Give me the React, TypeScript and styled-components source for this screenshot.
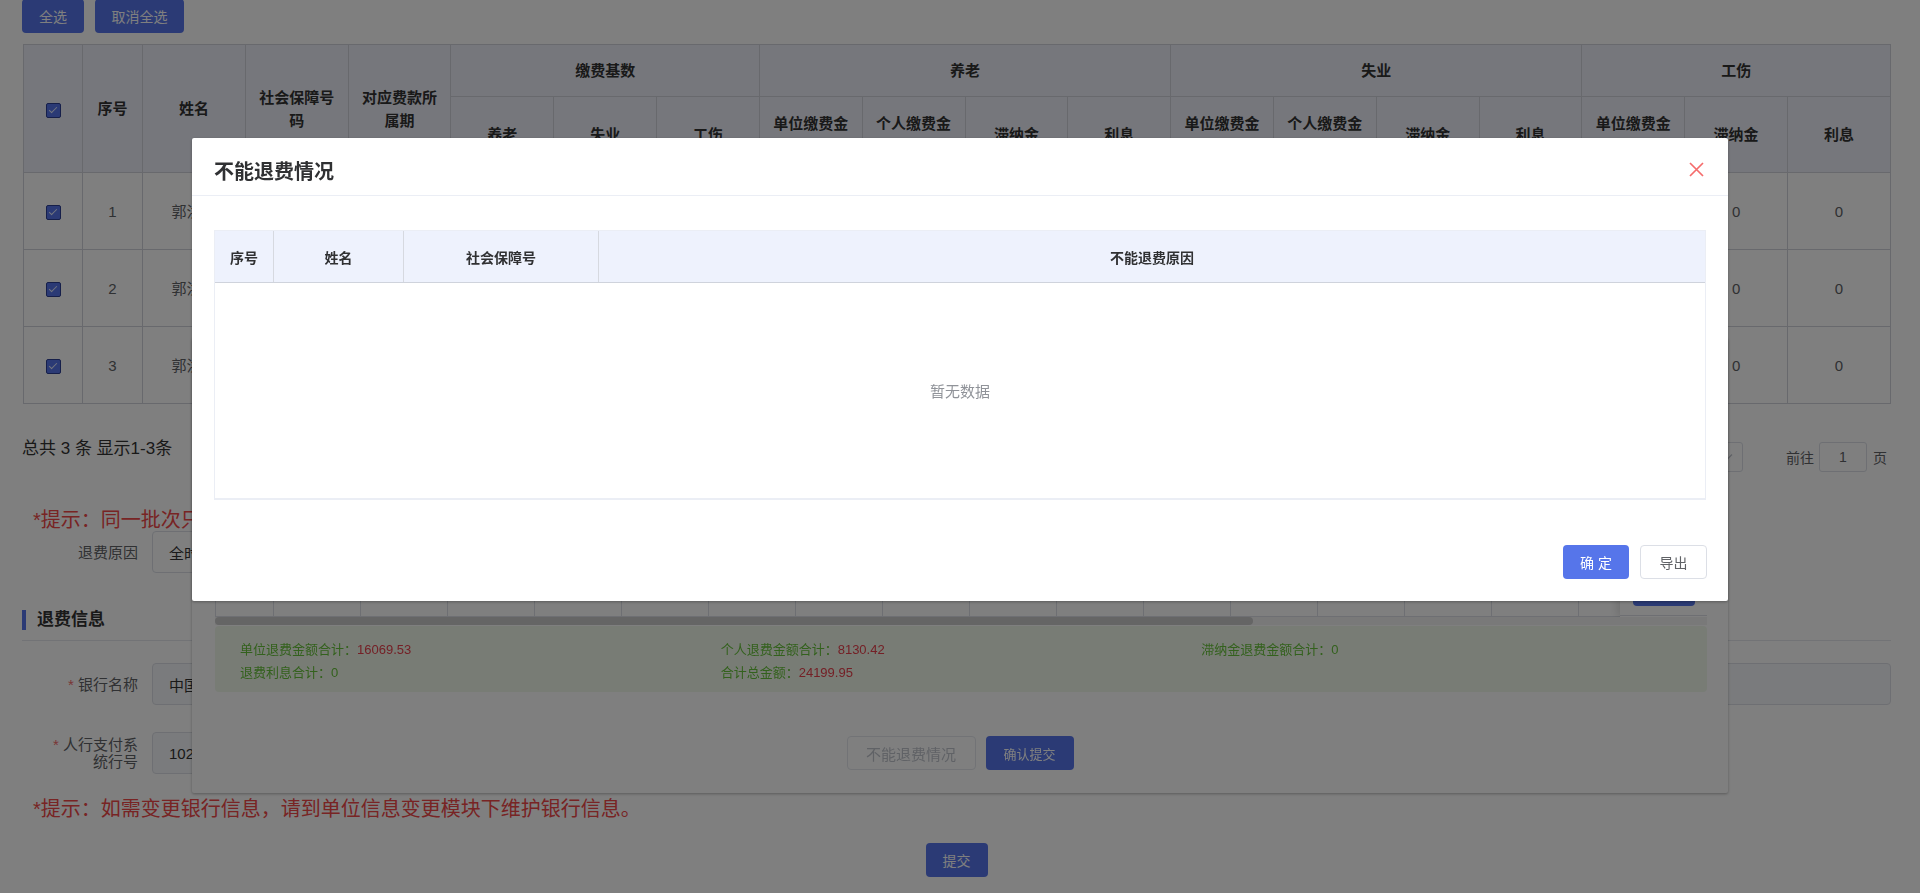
import React from 'react';
import styled, { createGlobalStyle } from 'styled-components';

const PRIMARY = '#5675ea';
const FONT = '"Liberation Sans", "Noto Sans CJK SC", sans-serif';

const GlobalStyle = createGlobalStyle`
  html, body { margin: 0; padding: 0; background: #fff; overflow: hidden; }
  body { font-family: ${FONT}; color: #333; }
  *, *::before, *::after { box-sizing: border-box; }
  button { font-family: ${FONT}; }
`;

/* ---------------- page ---------------- */
const Page = styled.div`
  width: 1920px;
  height: 893px;
  overflow: hidden;
  padding: 0 29px 0 22px;
  background: #fff;
`;

const TopBar = styled.div`
  display: flex;
  gap: 11px;
  margin-top: -1px;
`;

const PrimaryButton = styled.button<{ $w: number; $h?: number; $fs?: number }>`
  width: ${(p) => p.$w}px;
  height: ${(p) => p.$h ?? 34}px;
  border: none;
  border-radius: 4px;
  background: ${PRIMARY};
  color: #fff;
  font-size: ${(p) => p.$fs ?? 14}px;
  padding: 0;
  display: inline-flex;
  align-items: center;
  justify-content: center;
  white-space: pre;
`;

const PlainButton = styled.button<{ $w: number; $muted?: boolean; $fs?: number }>`
  width: ${(p) => p.$w}px;
  height: 34px;
  border: 1px solid ${(p) => (p.$muted ? '#e4e7ed' : '#dcdfe6')};
  border-radius: 4px;
  background: #fff;
  color: ${(p) => (p.$muted ? '#c0c4cc' : '#606266')};
  font-size: ${(p) => p.$fs ?? 14}px;
  padding: 0;
  display: inline-flex;
  align-items: center;
  justify-content: center;
`;

const GridTable = styled.table`
  width: calc(100% - 1px);
  margin: 11px 0 0 1px;
  border-collapse: collapse;
  table-layout: fixed;
`;

const HeadRow = styled.tr<{ $h: number }>`
  height: ${(p) => p.$h}px;
`;

const HeadCell = styled.th`
  background: #eceef8;
  border: 1px solid #d0d2da;
  font-size: 15px;
  font-weight: 700;
  color: #333;
  line-height: 23px;
  padding: 0 10px;
  text-align: center;
  vertical-align: middle;
  overflow: hidden;
`;

const BodyCell = styled.td`
  height: 77px;
  border: 1px solid #d0d2da;
  font-size: 15px;
  color: #606266;
  line-height: 23px;
  padding: 0 10px;
  text-align: center;
  vertical-align: middle;
  overflow: hidden;
  word-break: break-all;
`;

const Check = styled.span`
  display: inline-block;
  position: relative;
  width: 15px;
  height: 15px;
  border-radius: 2px;
  background: ${PRIMARY};
  border: 1px solid #2c3e94;
  vertical-align: middle;
  &::after {
    content: '';
    position: absolute;
    left: 4px;
    top: 1px;
    width: 4px;
    height: 8px;
    border: solid #e8ecff;
    border-width: 0 1.5px 1.5px 0;
    transform: rotate(45deg);
  }
`;

const PagerRow = styled.div`
  display: flex;
  justify-content: space-between;
  align-items: flex-start;
  margin-top: 38px;
  height: 30px;
`;

const TotalText = styled.div`
  font-size: 17px;
  line-height: 18px;
  margin-top: -2px;
  color: #333;
`;

const Pager = styled.div`
  display: flex;
  align-items: center;
  height: 30px;
  margin-right: 4px;
  font-size: 14px;
  color: #606266;
`;

const PagerBtn = styled.span`
  width: 30px;
  height: 28px;
  display: inline-flex;
  align-items: center;
  justify-content: center;
  color: #c0c4cc;
  margin: 0 4px;
`;

const PagerNum = styled(PagerBtn)`
  color: ${PRIMARY};
  font-weight: 700;
`;

const SizeSelect = styled.div`
  position: relative;
  width: 100px;
  height: 30px;
  margin-left: 12px;
  border: 1px solid #dcdfe6;
  border-radius: 3px;
  display: flex;
  align-items: center;
  padding-left: 10px;
  font-size: 13px;
  color: #606266;
`;

const ChevronIcon = styled.svg<{ $right: number }>`
  position: absolute;
  right: ${(p) => p.$right}px;
  top: 50%;
  margin-top: -5px;
`;

const Chevron = ({ right }: { right: number }) => (
  <ChevronIcon $right={right} width="12" height="10" viewBox="0 0 12 10">
    <path d="M1 2.5 L6 7.5 L11 2.5" fill="none" stroke="#c0c4cc" strokeWidth="1.3" />
  </ChevronIcon>
);

const Jumper = styled.div`
  display: flex;
  align-items: center;
  margin-left: 43px;
  gap: 5px;
  font-size: 14px;
  color: #606266;
`;

const JumpInput = styled.div`
  width: 48px;
  height: 30px;
  border: 1px solid #dcdfe6;
  border-radius: 3px;
  display: flex;
  align-items: center;
  justify-content: center;
  color: #606266;
  margin-right: 1px;
`;

const Hint = styled.div<{ $top: number }>`
  margin-top: ${(p) => p.$top}px;
  padding-left: 11px;
  font-size: 20px;
  line-height: 22px;
  color: #f04848;
  white-space: nowrap;
`;

const FormRow = styled.div<{ $top: number }>`
  display: flex;
  align-items: center;
  margin-top: ${(p) => p.$top}px;
`;

const FormLabel = styled.label`
  width: 130px;
  flex: none;
  padding: 0 14px 0 28px;
  text-align: right;
  font-size: 15px;
  line-height: 17px;
  color: #606266;
`;

const Req = styled.span`
  color: #f56c6c;
`;

const FieldBox = styled.div<{ $w?: number; $disabled?: boolean }>`
  position: relative;
  ${(p) => (p.$w ? `width: ${p.$w}px;` : 'flex: 1;')}
  height: 42px;
  border: 1px solid #dcdfe6;
  border-radius: 4px;
  background: ${(p) => (p.$disabled ? '#f5f7fa' : '#fff')};
  display: flex;
  align-items: center;
  padding-left: 16px;
  font-size: 15px;
  color: #333;
  white-space: nowrap;
  overflow: hidden;
`;

const SectionHead = styled.div`
  margin-top: 37px;
  padding-bottom: 10px;
  border-bottom: 1px solid #e4e7ed;
`;

const SectionTitle = styled.div`
  border-left: 4px solid ${PRIMARY};
  padding-left: 11px;
  font-size: 17px;
  font-weight: 700;
  line-height: 20px;
  color: #333;
`;

const SubmitRow = styled.div`
  display: flex;
  justify-content: center;
  margin-top: 23px;
`;

/* ---------------- lower dialog (behind mask) ---------------- */
const UnderDialog = styled.div`
  position: fixed;
  left: 192px;
  width: 1536px;
  bottom: 100px;
  background: #fff;
  border-radius: 2px;
  box-shadow: 0 1px 3px rgba(0, 0, 0, 0.3);
`;

const DialogHeader = styled.div`
  position: relative;
  padding: 23px 24px 12px 22px;
  border-bottom: 1px solid #ebeef5;
`;

const DialogTitle = styled.div`
  font-size: 20px;
  font-weight: 700;
  line-height: 22px;
  color: #303133;
`;

const UnderBody = styled.div`
  padding: 20px 21px 0 23px;
`;

const ScrollWrap = styled.div`
  position: relative;
  overflow: hidden;
`;

const InnerTable = styled.table`
  width: 2146px;
  border-collapse: collapse;
  table-layout: fixed;
`;

const InnerCell = styled.td<{ $head?: boolean }>`
  height: 50px;
  border: 1px solid #dcdfe6;
  background: ${(p) => (p.$head ? '#eef2fc' : '#fff')};
  font-size: 14px;
  font-weight: ${(p) => (p.$head ? 700 : 400)};
  color: #606266;
  text-align: center;
  white-space: nowrap;
  overflow: hidden;
`;

const FixedCol = styled.div`
  position: absolute;
  top: 0;
  right: 0;
  bottom: 0;
  width: 87px;
  background: #fff;
  box-shadow: -3px 0 8px rgba(0, 0, 0, 0.12);
  display: flex;
  flex-direction: column;
`;

const FixedCell = styled.div<{ $head?: boolean }>`
  height: 50px;
  flex: none;
  border-bottom: 1px solid #dcdfe6;
  background: ${(p) => (p.$head ? '#eef2fc' : '#fff')};
  display: flex;
  align-items: center;
  justify-content: center;
  padding-top: 2px;
  font-size: 14px;
  font-weight: 700;
  color: #606266;
`;

const ScrollTrack = styled.div`
  height: 8px;
  background: #f3f3f3;
  position: relative;
`;

const ScrollThumb = styled.div`
  height: 8px;
  border-radius: 4px;
  background: #cacaca;
`;

const Summary = styled.div`
  margin-top: 1px;
  background: #f0f9eb;
  border-radius: 4px;
  padding: 12px 25px 8px;
  display: grid;
  grid-template-columns: repeat(3, 1fr);
  font-size: 13px;
  line-height: 23px;
  color: #67c23a;
`;

const SumValue = styled.span`
  color: #e8404c;
`;

const UnderFooter = styled.div`
  display: flex;
  justify-content: center;
  gap: 10px;
  padding: 44px 0 23px;
`;

/* ---------------- mask + top dialog ---------------- */
const Mask = styled.div`
  position: fixed;
  inset: 0;
  background: rgba(0, 0, 0, 0.5);
`;

const Dialog = styled.div`
  position: fixed;
  top: 138px;
  left: 192px;
  width: 1536px;
  background: #fff;
  border-radius: 2px;
  box-shadow: 0 1px 3px rgba(0, 0, 0, 0.3);
`;

const CloseIcon = styled.svg`
  position: absolute;
  right: 23px;
  top: 23px;
`;

const DialogBody = styled.div`
  padding: 34px 22px 0;
`;

const EmptyTable = styled.div`
  border: 1px solid #ebeef5;
  border-bottom-width: 2px;
`;

const EmptyHead = styled.div`
  display: grid;
  grid-template-columns: 59px 130px 195px 1fr;
  height: 52px;
  background: #eef2fd;
  border-bottom: 1px solid #cfd3dc;
`;

const EmptyHeadCell = styled.div`
  display: flex;
  align-items: center;
  justify-content: center;
  font-size: 14px;
  font-weight: 700;
  color: #303133;
  border-right: 1px solid #d6d9e0;
  &:last-child { border-right: none; }
`;

const EmptyBody = styled.div`
  height: 215px;
  display: flex;
  align-items: center;
  justify-content: center;
  font-size: 15px;
  color: #909399;
`;

const DialogFooter = styled.div`
  display: flex;
  justify-content: flex-end;
  gap: 11px;
  padding: 45px 21px 22px;
`;

/* ---------------- data ---------------- */
const baseHeads = ['养老', '失业', '工伤'];
const ylHeads = ['单位缴费金额', '个人缴费金额', '滞纳金', '利息'];
const gsHeads = ['单位缴费金额', '滞纳金', '利息'];

const rows = [
  { no: 1, name: '郭洪涛', id: '3701021985', period: '202306', vals: ['4500', '4500', '4500', '720', '360', '0', '0', '36', '13.5', '0', '0', '18', '0', '0'] },
  { no: 2, name: '郭洪波', id: '3701021987', period: '202306', vals: ['4500', '4500', '4500', '720', '360', '0', '0', '36', '13.5', '0', '0', '18', '0', '0'] },
  { no: 3, name: '郭洪亮', id: '3701021990', period: '202306', vals: ['4500', '4500', '4500', '720', '360', '0', '0', '36', '13.5', '0', '0', '18', '0', '0'] },
];

const innerCols = Array.from({ length: 25 });

export default function App() {
  return (
    <>
      <GlobalStyle />
      <Page>
        <TopBar>
          <PrimaryButton $w={62}>全选</PrimaryButton>
          <PrimaryButton $w={89}>取消全选</PrimaryButton>
        </TopBar>

        <GridTable>
          <colgroup>
            <col style={{ width: 59 }} />
            <col style={{ width: 60 }} />
            {Array.from({ length: 17 }).map((_, i) => (
              <col key={i} />
            ))}
          </colgroup>
          <thead>
            <HeadRow $h={52}>
              <HeadCell rowSpan={2}><Check /></HeadCell>
              <HeadCell rowSpan={2}>序号</HeadCell>
              <HeadCell rowSpan={2}>姓名</HeadCell>
              <HeadCell rowSpan={2}>社会保障号码</HeadCell>
              <HeadCell rowSpan={2}>对应费款所属期</HeadCell>
              <HeadCell colSpan={3}>缴费基数</HeadCell>
              <HeadCell colSpan={4}>养老</HeadCell>
              <HeadCell colSpan={4}>失业</HeadCell>
              <HeadCell colSpan={3}>工伤</HeadCell>
            </HeadRow>
            <HeadRow $h={76}>
              {baseHeads.map((h) => <HeadCell key={'b' + h}>{h}</HeadCell>)}
              {ylHeads.map((h) => <HeadCell key={'y' + h}>{h}</HeadCell>)}
              {ylHeads.map((h) => <HeadCell key={'s' + h}>{h}</HeadCell>)}
              {gsHeads.map((h) => <HeadCell key={'g' + h}>{h}</HeadCell>)}
            </HeadRow>
          </thead>
          <tbody>
            {rows.map((r) => (
              <tr key={r.no}>
                <BodyCell><Check /></BodyCell>
                <BodyCell>{r.no}</BodyCell>
                <BodyCell>{r.name}</BodyCell>
                <BodyCell>{r.id}</BodyCell>
                <BodyCell>{r.period}</BodyCell>
                {r.vals.map((v, i) => <BodyCell key={i}>{v}</BodyCell>)}
              </tr>
            ))}
          </tbody>
        </GridTable>

        <PagerRow>
          <TotalText>总共 3 条 显示1-3条</TotalText>
          <Pager>
            <PagerBtn>‹</PagerBtn>
            <PagerNum>1</PagerNum>
            <PagerBtn>›</PagerBtn>
            <SizeSelect>
              10条/页
              <Chevron right={9} />
            </SizeSelect>
            <Jumper>
              前往
              <JumpInput>1</JumpInput>
              页
            </Jumper>
          </Pager>
        </PagerRow>

        <Hint $top={37}>*提示：同一批次只能选择一种退费原因，不同原因请分批次办理。</Hint>

        <FormRow $top={0}>
          <FormLabel>退费原因</FormLabel>
          <FieldBox $w={420}>
            全时段退费
            <Chevron right={12} />
          </FieldBox>
        </FormRow>

        <SectionHead>
          <SectionTitle>退费信息</SectionTitle>
        </SectionHead>

        <FormRow $top={22}>
          <FormLabel><Req>*</Req> 银行名称</FormLabel>
          <FieldBox $disabled>中国工商银行股份有限公司济南分行</FieldBox>
        </FormRow>

        <FormRow $top={27}>
          <FormLabel><Req>*</Req> 人行支付系统行号</FormLabel>
          <FieldBox $disabled $w={760}>102451000011</FieldBox>
        </FormRow>

        <Hint $top={24}>*提示：如需变更银行信息，请到单位信息变更模块下维护银行信息。</Hint>

        <SubmitRow>
          <PrimaryButton $w={62}>提交</PrimaryButton>
        </SubmitRow>
      </Page>

      <UnderDialog>
        <DialogHeader>
          <DialogTitle>退费确认</DialogTitle>
        </DialogHeader>
        <UnderBody>
          <ScrollWrap>
            <InnerTable>
              <colgroup>
                <col style={{ width: 58 }} />
                {innerCols.slice(1).map((_, i) => <col key={i} style={{ width: 87 }} />)}
              </colgroup>
              <tbody>
                <tr>
                  {innerCols.map((_, i) => <InnerCell key={i} $head>{i === 0 ? '序号' : ''}</InnerCell>)}
                </tr>
                {[1, 2, 3].map((n) => (
                  <tr key={n}>
                    {innerCols.map((_, i) => <InnerCell key={i}>{i === 0 ? n : ''}</InnerCell>)}
                  </tr>
                ))}
              </tbody>
            </InnerTable>
            <FixedCol>
              <FixedCell $head>操作</FixedCell>
              {[1, 2, 3].map((n) => (
                <FixedCell key={n}>
                  <PrimaryButton $w={62} $h={28} $fs={12}>详情</PrimaryButton>
                </FixedCell>
              ))}
            </FixedCol>
          </ScrollWrap>
          <ScrollTrack>
            <ScrollThumb style={{ width: '69.6%' }} />
          </ScrollTrack>
          <Summary>
            <div>单位退费金额合计：<SumValue>16069.53</SumValue></div>
            <div>个人退费金额合计：<SumValue>8130.42</SumValue></div>
            <div>滞纳金退费金额合计：0</div>
            <div>退费利息合计：0</div>
            <div>合计总金额：<SumValue>24199.95</SumValue></div>
            <div />
          </Summary>
        </UnderBody>
        <UnderFooter>
          <PlainButton $w={129} $muted $fs={15}>不能退费情况</PlainButton>
          <PrimaryButton $w={88} $fs={13}>确认提交</PrimaryButton>
        </UnderFooter>
      </UnderDialog>

      <Mask />

      <Dialog>
        <DialogHeader>
          <DialogTitle>不能退费情况</DialogTitle>
          <CloseIcon width="17" height="17" viewBox="0 0 17 17">
            <path d="M2 2 L15 15 M15 2 L2 15" stroke="#f56c6c" strokeWidth="1.7" fill="none" />
          </CloseIcon>
        </DialogHeader>
        <DialogBody>
          <EmptyTable>
            <EmptyHead>
              <EmptyHeadCell>序号</EmptyHeadCell>
              <EmptyHeadCell>姓名</EmptyHeadCell>
              <EmptyHeadCell>社会保障号</EmptyHeadCell>
              <EmptyHeadCell>不能退费原因</EmptyHeadCell>
            </EmptyHead>
            <EmptyBody>暂无数据</EmptyBody>
          </EmptyTable>
        </DialogBody>
        <DialogFooter>
          <PrimaryButton $w={66}>{'确 定'}</PrimaryButton>
          <PlainButton $w={67}>导出</PlainButton>
        </DialogFooter>
      </Dialog>
    </>
  );
}
